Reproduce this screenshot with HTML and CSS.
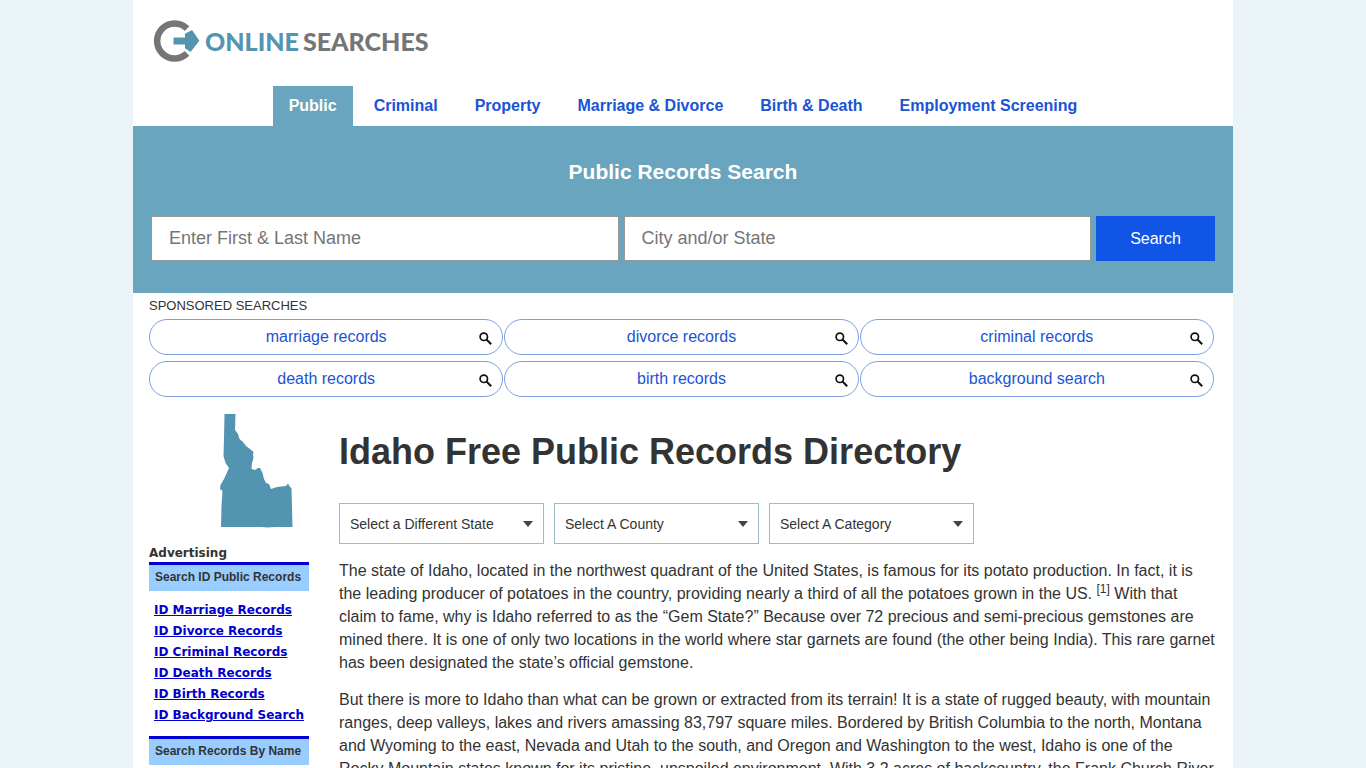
FILE: index.html
```
<!DOCTYPE html>
<html lang="en">
<head>
  <meta charset="UTF-8">
  <meta name="viewport" content="width=device-width, initial-scale=1.0">
  <title>Idaho Free Public Records Directory</title>
  <link rel="stylesheet" href="styles.css">
</head>
<body>
  <div class="wrapper">
    <header class="header">
      <a class="logo" href="#">
        <svg class="logo-icon" width="48" height="42" viewBox="0 1 48 42" aria-hidden="true">
          <path d="M35 9.600A17.500 17.500 0 1 0 35 34.400" fill="none" stroke="#757575" stroke-width="6.500"/>
          <path d="M21.500 18.400H33V14.700L40 11L47.400 21.800L38.500 33L33 29.200V25.400H21.500Z" fill="#5394b0"/>
        </svg>
        <span class="logo-online">ONLINE</span>
        <span class="logo-searches">SEARCHES</span>
      </a>
      <nav class="tabs">
        <a class="tab active" href="#">Public</a>
        <a class="tab" href="#">Criminal</a>
        <a class="tab" href="#">Property</a>
        <a class="tab" href="#">Marriage &amp; Divorce</a>
        <a class="tab" href="#">Birth &amp; Death</a>
        <a class="tab" href="#">Employment Screening</a>
      </nav>
    </header>

    <section class="search-panel">
      <h2>Public Records Search</h2>
      <form class="search-form">
        <input type="text" placeholder="Enter First &amp; Last Name" aria-label="Enter First &amp; Last Name">
        <input type="text" placeholder="City and/or State" aria-label="City and/or State">
        <button type="submit">Search</button>
      </form>
    </section>

    <section class="sponsored">
      <div class="sponsored-title">SPONSORED SEARCHES</div>
      <div class="pills">
        <a class="pill" href="#"><span>marriage records</span><svg viewBox="0 0 13 13"><use href="#glass"/></svg></a>
        <a class="pill" href="#"><span>divorce records</span><svg viewBox="0 0 13 13"><use href="#glass"/></svg></a>
        <a class="pill" href="#"><span>criminal records</span><svg viewBox="0 0 13 13"><use href="#glass"/></svg></a>
        <a class="pill" href="#"><span>death records</span><svg viewBox="0 0 13 13"><use href="#glass"/></svg></a>
        <a class="pill" href="#"><span>birth records</span><svg viewBox="0 0 13 13"><use href="#glass"/></svg></a>
        <a class="pill" href="#"><span>background search</span><svg viewBox="0 0 13 13"><use href="#glass"/></svg></a>
      </div>
    </section>

    <div class="columns">
      <aside class="sidebar">
        <svg class="state-map" width="74" height="116" viewBox="0 0 74 116" role="img" aria-label="Idaho">
          <path d="M5.500 1H16.500L16 17L19 21L20.500 26L24 29L27 33L31 36L34.500 39L34 42L34.500 45L33 50L32.500 56L36 57L39 55L41 55L43.500 60L45 66L47 70L50 71L52 76L55 75L58 74L67 73L69 70.500L71 74L72.500 75L73.500 114H56L48 114.600L43 114H2L2.500 93L3.500 78L1 76L1.500 72L5 66L10 55L6.500 50L4.500 43L5 25Z" fill="#5394b0"/>
        </svg>
        <div class="ad-label">Advertising</div>
        <h4>Search ID Public Records</h4>
        <ul class="ad-links">
          <li><a href="#">ID Marriage Records</a></li>
          <li><a href="#">ID Divorce Records</a></li>
          <li><a href="#">ID Criminal Records</a></li>
          <li><a href="#">ID Death Records</a></li>
          <li><a href="#">ID Birth Records</a></li>
          <li><a href="#">ID Background Search</a></li>
        </ul>
        <h4>Search Records By Name</h4>
      </aside>

      <main class="content">
        <h1>Idaho Free Public Records Directory</h1>
        <div class="filters">
          <div class="select-box">
            <select aria-label="State"><option>Select a Different State</option></select>
          </div>
          <div class="select-box">
            <select aria-label="County"><option>Select A County</option></select>
          </div>
          <div class="select-box">
            <select aria-label="Category"><option>Select A Category</option></select>
          </div>
        </div>
        <p>The state of Idaho, located in the northwest quadrant of the United States, is famous for its potato production. In fact, it is the leading producer of potatoes in the country, providing nearly a third of all the potatoes grown in the US. <sup>[1]</sup> With that claim to fame, why is Idaho referred to as the “Gem State?” Because over 72 precious and semi-precious gemstones are mined there. It is one of only two locations in the world where star garnets are found (the other being India). This rare garnet has been designated the state’s official gemstone.</p>
        <p>But there is more to Idaho than what can be grown or extracted from its terrain! It is a state of rugged beauty, with mountain ranges, deep valleys, lakes and rivers amassing 83,797 square miles. Bordered by British Columbia to the north, Montana and Wyoming to the east, Nevada and Utah to the south, and Oregon and Washington to the west, Idaho is one of the Rocky Mountain states known for its pristine, unspoiled environment. With 3.2 acres of backcountry, the Frank Church River</p>
      </main>
    </div>
  </div>

  <svg class="symbols" aria-hidden="true">
    <symbol id="glass" viewBox="0 0 13 13">
      <circle cx="4.800" cy="4.800" r="3.700" fill="none" stroke="#111" stroke-width="1.700"/>
      <path d="M7.500 7.500L12.200 12.200" stroke="#111" stroke-width="2"/>
    </symbol>
  </svg>
</body>
</html>
```

FILE: styles.css
```
* {
  box-sizing: border-box;
}

body {
  margin: 0;
  background: #eaf3f7;
  color: #333;
  font-family: Arial, "Liberation Sans", sans-serif;
  font-size: 16px;
}

a {
  text-decoration: none;
}

.symbols {
  display: none;
}

.wrapper {
  max-width: 1100px;
  margin: 0 auto;
  background: #fff;
}

/* header */
.logo {
  display: flex;
  align-items: center;
  height: 86px;
  padding: 0 19px 5px;
  font-family: Lato, sans-serif;
  font-size: 25px;
  font-weight: 900;
}

.logo-icon {
  margin-right: 5px;
}

.logo-online {
  margin-right: 4px;
  color: #5394b0;
}

.logo-searches {
  color: #757575;
}

.tabs {
  display: flex;
  flex-wrap: wrap;
  justify-content: center;
  gap: 5px;
}

.tab {
  padding: 0 16px;
  color: #1a54d4;
  font-weight: bold;
  line-height: 40px;
}

.tab.active {
  background: #69a5be;
  color: #fff;
}

/* search */
.search-panel {
  padding: 34px 18px 32px;
  background: #69a5be;
}

.search-panel h2 {
  margin: 0 0 32px;
  color: #fff;
  font-size: 21px;
  line-height: 24px;
  text-align: center;
}

.search-form {
  display: flex;
  gap: 5px;
}

.search-form input {
  flex: 1;
  min-width: 0;
  height: 45px;
  padding: 0 17px;
  border: 1px solid #999;
  font-family: inherit;
  font-size: 18px;
}

.search-form input::placeholder {
  color: #757575;
}

.search-form button {
  width: 119px;
  height: 45px;
  border: 0;
  background: #1155e6;
  color: #fff;
  font-family: inherit;
  font-size: 16px;
}

/* sponsored links */
.sponsored {
  padding: 4px 19px 0 16px;
}

.sponsored-title {
  font-size: 13px;
  line-height: 18px;
  margin-bottom: 4px;
}

.pills {
  display: grid;
  grid-template-columns: repeat(3, 1fr);
  gap: 6px 1px;
}

.pill {
  display: flex;
  align-items: center;
  height: 36px;
  padding: 0 10px 0 23px;
  border: 1px solid #7b9fe0;
  border-radius: 18px;
  color: #1a54d4;
}

.pill span {
  flex: 1;
  text-align: center;
}

.pill svg {
  width: 13px;
  height: 13px;
  margin-top: 2px;
}

/* columns */
.columns {
  display: flex;
  gap: 30px;
  padding: 0 16px;
}

.sidebar {
  flex: 0 0 160px;
  padding-top: 16px;
}

.state-map {
  display: block;
  margin: 0 16px 16px auto;
}

.ad-label {
  font-family: Verdana, "DejaVu Sans", sans-serif;
  font-size: 12px;
  font-weight: bold;
  line-height: 17px;
}

.sidebar h4 {
  margin: 0;
  padding: 0 6px 2px;
  border-top: 3px solid #0000d6;
  background: #99ccff;
  font-size: 12px;
  line-height: 24px;
}

.ad-links {
  margin: 0;
  padding: 9px 0 10px 5px;
  list-style: none;
  font-family: Verdana, "DejaVu Sans", sans-serif;
  font-size: 12px;
  font-weight: bold;
  line-height: 21px;
  white-space: nowrap;
}

.ad-links a {
  color: #0000cc;
  text-decoration: underline;
}

/* main content */
.content {
  flex: 1;
  min-width: 0;
}

h1 {
  margin: 34px 0 30px;
  font-size: 36px;
  line-height: 42px;
}

.filters {
  display: flex;
  flex-wrap: wrap;
  gap: 10px;
  margin-bottom: 15px;
}

.select-box {
  position: relative;
  width: 205px;
}

.select-box::after {
  content: "";
  position: absolute;
  top: 18px;
  right: 11px;
  border: 5px solid transparent;
  border-top: 6px solid #444;
  border-bottom: 0;
  pointer-events: none;
}

.select-box select {
  width: 100%;
  height: 41px;
  padding: 0 10px;
  border: 1px solid #9bbcc9;
  border-radius: 0;
  background: #fff;
  color: #333;
  font-family: inherit;
  font-size: 14px;
  appearance: none;
}

.content p {
  margin: 0 0 14px;
  line-height: 23px;
}

sup {
  font-size: 12px;
  line-height: 0;
}
```
